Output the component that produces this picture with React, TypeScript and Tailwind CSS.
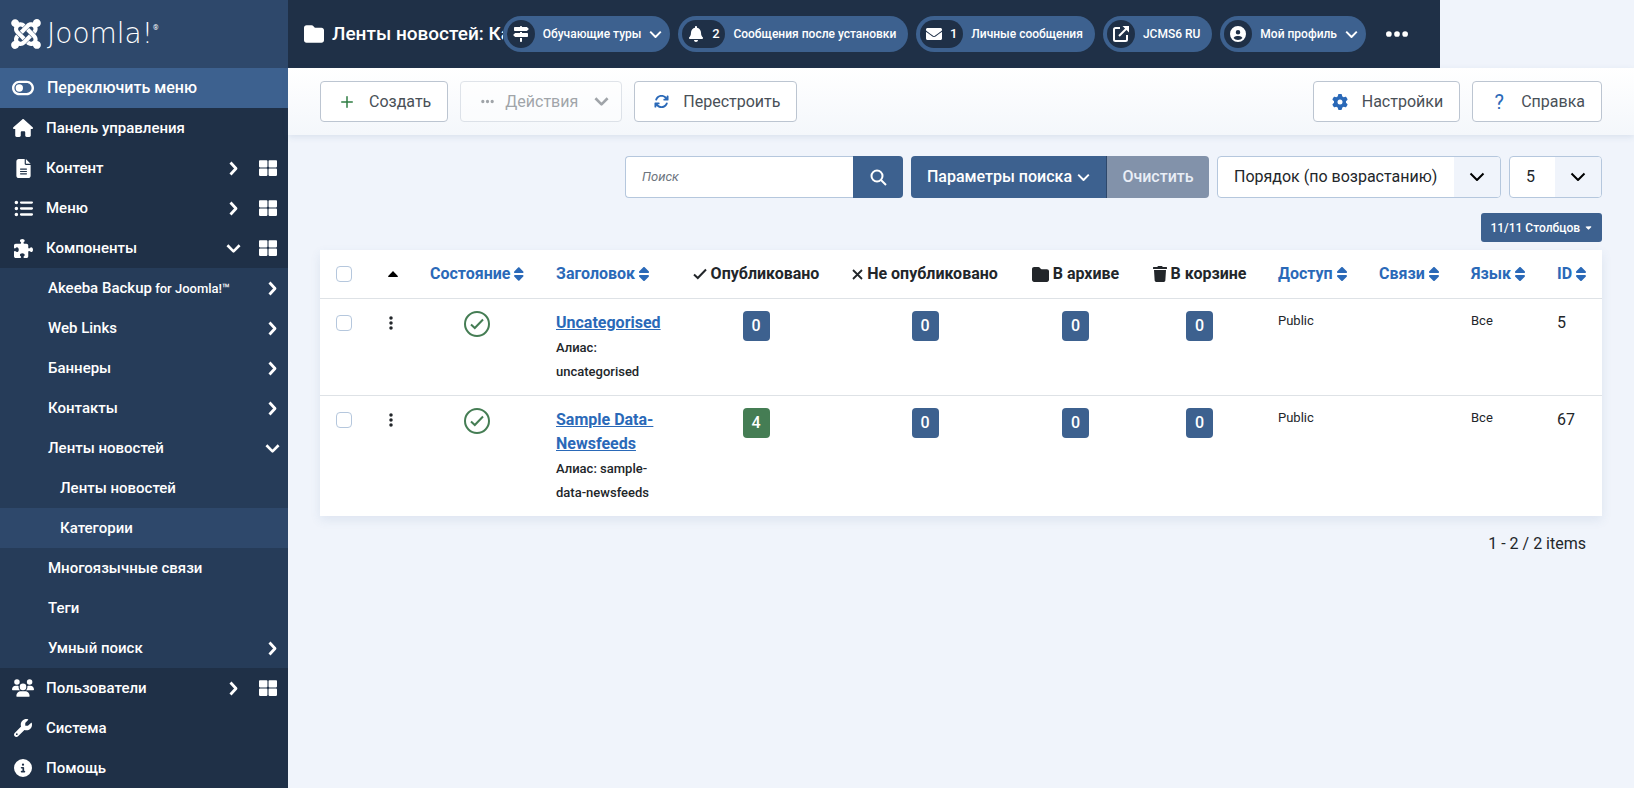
import React from "react";
import clsx from "clsx";
import {
    FaArrowsRotate,
    FaCaretDown,
    FaCircleInfo,
    FaCircleUser,
    FaEllipsis,
    FaEllipsisVertical,
    FaFileLines,
    FaFolder,
    FaGear,
    FaHouse,
    FaListUl,
    FaPuzzlePiece,
    FaSignsPost,
    FaSort,
    FaToggleOff,
    FaUsers,
    FaWrench,
} from "react-icons/fa6";
import { FaBell, FaEnvelope, FaJoomla, FaThLarge, FaTrash } from "react-icons/fa";
import { Plus } from "lucide-react";

type MenuItem = {
    label: string;
    small?: string;
    icon?: React.ReactNode;
    level: 1 | 2 | 3;
    arrow?: "right" | "down";
    dashboard?: boolean;
    active?: boolean;
};

const mainTop: MenuItem[] = [
    { label: "Панель управления", icon: <FaHouse size={20} />, level: 1 },
    { label: "Контент", icon: <FaFileLines size={19} />, level: 1, arrow: "right", dashboard: true },
    { label: "Меню", icon: <FaListUl size={19} />, level: 1, arrow: "right", dashboard: true },
    { label: "Компоненты", icon: <FaPuzzlePiece size={19} />, level: 1, arrow: "down", dashboard: true },
];

const components: MenuItem[] = [
    { label: "Akeeba Backup", small: "for Joomla!™", level: 2, arrow: "right" },
    { label: "Web Links", level: 2, arrow: "right" },
    { label: "Баннеры", level: 2, arrow: "right" },
    { label: "Контакты", level: 2, arrow: "right" },
    { label: "Ленты новостей", level: 2, arrow: "down" },
    { label: "Ленты новостей", level: 3 },
    { label: "Категории", level: 3, active: true },
    { label: "Многоязычные связи", level: 2 },
    { label: "Теги", level: 2 },
    { label: "Умный поиск", level: 2, arrow: "right" },
];

const mainBottom: MenuItem[] = [
    { label: "Пользователи", icon: <FaUsers size={22} />, level: 1, arrow: "right", dashboard: true },
    { label: "Система", icon: <FaWrench size={18} />, level: 1 },
    { label: "Помощь", icon: <FaCircleInfo size={18} />, level: 1 },
];

const ChevronRight = () => (
    <svg width="9" height="15" viewBox="0 0 9 15" fill="none" stroke="currentColor" strokeWidth="2.8" strokeLinejoin="round">
        <path d="M1.500 1.500 7 7.500 1.500 13.500" />
    </svg>
);

const ChevronDown = ({ size = 15, stroke = 2.8, className }: { size?: number; stroke?: number; className?: string }) => (
    <svg
        width={size}
        height={size}
        viewBox="0 0 16 16"
        fill="none"
        stroke="currentColor"
        strokeWidth={stroke}
        strokeLinejoin="round"
        className={className}
    >
        <path d="M1.500 4.500 8 11 14.500 4.500" />
    </svg>
);

const CheckIcon = () => (
    <svg width="14" height="12" viewBox="0 0 14 12" fill="none" stroke="currentColor" strokeWidth="2">
        <path d="M1 6.500 4.800 10 13 1.500" />
    </svg>
);

const CrossIcon = () => (
    <svg width="11" height="11" viewBox="0 0 11 11" fill="none" stroke="currentColor" strokeWidth="1.8">
        <path d="M1 1 10 10M10 1 1 10" />
    </svg>
);

const SearchIcon = () => (
    <svg width="17" height="17" viewBox="0 0 17 17" fill="none" stroke="currentColor" strokeWidth="2">
        <circle cx="7" cy="7" r="5.500" />
        <path d="m11 11 5 5" />
    </svg>
);

const ExternalIcon = () => (
    <svg width="18" height="18" viewBox="0 0 18 18" fill="none" stroke="currentColor" strokeWidth="2">
        <path d="M8 3H3.500A1.500 1.500 0 0 0 2 4.500V14.500A1.500 1.500 0 0 0 3.500 16H13.500A1.500 1.500 0 0 0 15 14.500V10" />
        <path d="M7 11 14.500 3.500" />
        <path d="M10.500 1H17V7.500Z" fill="currentColor" stroke="none" />
    </svg>
);

const MenuRow = ({ item }: { item: MenuItem }) => {
    return (
        <li
            className={clsx(
                "flex h-10 items-center text-[15px] font-medium text-white",
                item.level === 1 && "pl-3",
                item.level === 2 && "pl-12",
                item.level === 3 && "pl-[60px]",
                item.active && "bg-[#2e486b]"
            )}
        >
            <a href="#" className="flex flex-1 items-center">
                {item.icon && <span className="mr-3 flex w-[22px] justify-center">{item.icon}</span>}
                <span>
                    {item.label}
                    {item.small && <span className="text-[13px]"> {item.small}</span>}
                </span>
            </a>
            {item.arrow && (
                <span className={clsx("flex w-5 justify-center", item.dashboard ? "mr-4" : "mr-[6px]")}>
                    {item.arrow === "right" ? <ChevronRight /> : <ChevronDown />}
                </span>
            )}
            {item.dashboard && (
                <a href="#" aria-label="Панель" className="mr-[11px]">
                    <FaThLarge size={18} />
                </a>
            )}
        </li>
    );
};

const SideBar = () => {
    return (
        <aside className="w-72 shrink-0 bg-[#1f3047]">
            <a href="#" className="flex h-[68px] items-center bg-[#2e486b] pl-[9px] text-white">
                <FaJoomla size={34} />
                <span className="ml-1 font-['DejaVu_Sans'] text-[28px] font-extralight">Joomla!</span>
                <span className="mb-3 text-[7px]">®</span>
            </a>
            <button className="flex h-10 w-full items-center bg-[#3d618f] pl-3 font-medium text-white">
                <span className="mr-[13px] flex w-[22px] justify-center">
                    <FaToggleOff size={22} />
                </span>
                Переключить меню
            </button>
            <ul>
                {mainTop.map((item) => (
                    <MenuRow key={item.label} item={item} />
                ))}
            </ul>
            <ul className="bg-[#263c59]">
                {components.map((item) => (
                    <MenuRow key={item.label + item.level} item={item} />
                ))}
            </ul>
            <ul>
                {mainBottom.map((item) => (
                    <MenuRow key={item.label} item={item} />
                ))}
            </ul>
        </aside>
    );
};

const HeaderPill = ({
    icon,
    label,
    count,
    arrow,
}: {
    icon: React.ReactNode;
    label: string;
    count?: number;
    arrow?: boolean;
}) => {
    return (
        <button
            className={clsx(
                "flex h-9 shrink-0 items-center rounded-full bg-[#3d618f] pl-1 text-xs font-medium whitespace-nowrap text-white",
                arrow ? "pr-2" : "pr-3"
            )}
        >
            <span
                className={clsx(
                    "mr-2 flex h-7 items-center justify-center gap-2 rounded-full bg-[#1f3047]",
                    count ? "w-[43px]" : "w-7"
                )}
            >
                {icon}
                {count && <span className="text-[13px]">{count}</span>}
            </span>
            {label}
            {arrow && <ChevronDown size={13} stroke={2.4} className="ml-2" />}
        </button>
    );
};

const Header = () => {
    return (
        <header className="flex h-[68px] max-w-[1152px] items-center gap-2 bg-[#1f3047] pr-[30px] pl-4 text-white">
            <div className="-mr-2 flex min-w-0 flex-1 items-center gap-2 overflow-hidden">
                <FaFolder size={20} className="shrink-0" />
                <h1 className="text-[19px] font-medium whitespace-nowrap">Ленты новостей: Категории</h1>
            </div>
            <HeaderPill icon={<FaSignsPost size={16} />} label="Обучающие туры" arrow />
            <HeaderPill icon={<FaBell size={16} />} label="Сообщения после установки" count={2} />
            <HeaderPill icon={<FaEnvelope size={16} />} label="Личные сообщения" count={1} />
            <HeaderPill icon={<ExternalIcon />} label="JCMS6 RU" />
            <HeaderPill icon={<FaCircleUser size={16} />} label="Мой профиль" arrow />
            <button aria-label="Ещё" className="ml-[10px]">
                <FaEllipsis size={26} />
            </button>
        </header>
    );
};

const ToolButton = ({
    icon,
    label,
    arrow,
    disabled,
}: {
    icon: React.ReactNode;
    label: string;
    arrow?: boolean;
    disabled?: boolean;
}) => {
    return (
        <button
            disabled={disabled}
            className={clsx(
                "flex h-[41px] items-center rounded border bg-white px-4 text-[#495057]",
                disabled ? "border-[#c3cbd6] opacity-50" : "border-[#bcc5d1]"
            )}
        >
            <span className={clsx("flex w-5 justify-center", arrow ? "mr-2" : "mr-3")}>{icon}</span>
            {label}
            {arrow && <ChevronDown size={15} className="-mr-1 ml-4" />}
        </button>
    );
};

const Toolbar = () => {
    return (
        <div className="flex h-[67px] items-center gap-3 bg-gradient-to-b from-white to-[#f4f7fb] px-8 shadow-[0_2px_6px_rgba(61,97,143,0.12)]">
            <ToolButton icon={<Plus size={18} className="text-[#2f7d43]" />} label="Создать" />
            <ToolButton icon={<FaEllipsis size={15} />} label="Действия" arrow disabled />
            <ToolButton icon={<FaArrowsRotate size={15} className="text-[#2a69b8]" />} label="Перестроить" />
            <div className="ml-auto flex gap-3">
                <ToolButton icon={<FaGear size={16} className="text-[#2a69b8]" />} label="Настройки" />
                <ToolButton icon={<span className="text-xl text-[#2a69b8]">?</span>} label="Справка" />
            </div>
        </div>
    );
};

const SelectBox = ({ label, value, className }: { label: string; value: string; className: string }) => {
    return (
        <div className={clsx("relative h-[42px] overflow-hidden rounded border border-[#b5c7dd] bg-white", className)}>
            <select aria-label={label} className="h-full w-full appearance-none bg-transparent pl-4 text-[#22262a]">
                <option>{value}</option>
            </select>
            <span className="pointer-events-none absolute top-0 right-0 flex h-full w-[46px] items-center justify-center bg-[#f0f4fb]">
                <ChevronDown size={16} stroke={2} className="text-black" />
            </span>
        </div>
    );
};

const Filters = () => {
    return (
        <div className="flex flex-wrap justify-end gap-2">
            <div className="flex h-[42px]">
                <input
                    type="text"
                    aria-label="Поиск"
                    placeholder="Поиск"
                    className="w-[228px] rounded-l border border-r-0 border-[#b5c7dd] bg-white px-4 text-[13px] placeholder:text-[#6d757e] placeholder:italic"
                />
                <button aria-label="Найти" className="flex w-[50px] items-center justify-center rounded-r bg-[#3d618f] text-white">
                    <SearchIcon />
                </button>
            </div>
            <div className="flex h-[42px] font-medium text-white">
                <button className="flex w-[196px] items-center justify-center gap-[5px] rounded-l border-r border-[#2e486b] bg-[#3d618f]">
                    Параметры поиска
                    <ChevronDown size={13} stroke={2.4} />
                </button>
                <button className="w-[102px] rounded-r bg-[#8292aa] text-[#e9eef6]">Очистить</button>
            </div>
            <SelectBox label="Сортировка" value="Порядок (по возрастанию)" className="w-[284px]" />
            <SelectBox label="Количество" value="5" className="w-[93px]" />
        </div>
    );
};

const SortHead = ({ label, className }: { label: string; className?: string }) => (
    <th className="px-4 py-3">
        <a href="#" className={clsx("flex items-center gap-1 whitespace-nowrap text-[#2a69b8]", className)}>
            {label}
            <FaSort className="h-4 w-[10px]" />
        </a>
    </th>
);

const CountHead = ({ icon, label }: { icon: React.ReactNode; label: string }) => (
    <th className="py-3">
        <div className="flex items-center justify-center gap-1 whitespace-nowrap">
            {icon}
            {label}
        </div>
    </th>
);

const rows = [
    { id: 5, title: "Uncategorised", alias: "uncategorised", counts: [0, 0, 0, 0] },
    { id: 67, title: "Sample Data-Newsfeeds", alias: "sample-data-newsfeeds", counts: [4, 0, 0, 0] },
];

const CategoryTable = () => {
    return (
        <table className="w-full table-fixed border-collapse bg-white text-left shadow-[0_4px_10px_rgba(61,97,143,0.1)]">
            <colgroup>
                <col className="w-[48px]" />
                <col className="w-[46px]" />
                <col className="w-[126px]" />
                <col className="w-[136px]" />
                <col className="w-[160px]" />
                <col className="w-[178px]" />
                <col className="w-[123px]" />
                <col className="w-[125px]" />
                <col className="w-[101px]" />
                <col className="w-[92px]" />
                <col className="w-[86px]" />
                <col className="w-[61px]" />
            </colgroup>
            <thead>
                <tr className="border-b border-[#dee2e6]">
                    <th className="py-3 pl-4">
                        <input
                            type="checkbox"
                            aria-label="Выбрать все"
                            className="block size-4 appearance-none rounded border border-[#b5c7dd] bg-white"
                        />
                    </th>
                    <th className="py-3 pl-1">
                        <svg width="10" height="6" viewBox="0 0 10 6" className="mx-auto text-black">
                            <path d="M5 0 10 5.200 9.500 6H.5L0 5.200Z" fill="currentColor" />
                        </svg>
                    </th>
                    <SortHead label="Состояние" className="justify-center" />
                    <SortHead label="Заголовок" />
                    <CountHead icon={<CheckIcon />} label="Опубликовано" />
                    <CountHead icon={<CrossIcon />} label="Не опубликовано" />
                    <CountHead icon={<FaFolder size={17} />} label="В архиве" />
                    <CountHead icon={<FaTrash className="h-4 w-[14px]" />} label="В корзине" />
                    <SortHead label="Доступ" />
                    <SortHead label="Связи" />
                    <SortHead label="Язык" />
                    <SortHead label="ID" />
                </tr>
            </thead>
            <tbody>
                {rows.map((row) => (
                    <tr key={row.id} className="border-b border-[#dee2e6] align-top last:border-b-0">
                        <td className="py-4 pl-4">
                            <input
                                type="checkbox"
                                aria-label={row.title}
                                className="block size-4 appearance-none rounded border border-[#b5c7dd] bg-white"
                            />
                        </td>
                        <td className="py-4">
                            <FaEllipsisVertical size={16} className="mx-auto" />
                        </td>
                        <td className="py-3">
                            <a
                                href="#"
                                aria-label="Опубликовано"
                                className="mx-auto flex size-[26px] items-center justify-center rounded-full border-2 border-[#457d54] text-[#457d54]"
                            >
                                <CheckIcon />
                            </a>
                        </td>
                        <th className="px-4 py-3 font-medium">
                            <a href="#" className="font-bold text-[#2a69b8] underline">
                                {row.title}
                            </a>
                            <div>
                                <span className="text-[13px]">Алиас: {row.alias}</span>
                            </div>
                        </th>
                        {row.counts.map((count, i) => (
                            <td key={i} className="py-3">
                                <a
                                    href="#"
                                    className={clsx(
                                        "mx-auto flex h-[30px] w-[27px] items-center justify-center rounded font-medium text-white",
                                        count > 0 ? "bg-[#457d54]" : "bg-[#3d618f]"
                                    )}
                                >
                                    {count}
                                </a>
                            </td>
                        ))}
                        <td className="px-4 py-3 text-[13px] leading-5">Public</td>
                        <td></td>
                        <td className="px-4 py-3 text-[13px] leading-5">Все</td>
                        <td className="px-4 py-3">{row.id}</td>
                    </tr>
                ))}
            </tbody>
        </table>
    );
};

const App = () => {
    return (
        <div className="flex min-h-screen bg-[#f0f4fb] font-['Roboto',sans-serif] text-base text-[#22262a]">
            <SideBar />
            <div className="min-w-0 flex-1">
                <Header />
                <Toolbar />
                <main className="px-8 pt-[21px]">
                    <Filters />
                    <div className="mt-[15px] mb-2 flex justify-end">
                        <button className="flex h-[29px] items-center gap-1 rounded-[3px] bg-[#3d618f] px-[9px] text-xs font-medium text-white">
                            11/11 Столбцов
                            <FaCaretDown size={9} />
                        </button>
                    </div>
                    <CategoryTable />
                    <p className="mt-4 pr-4 text-right">1 - 2 / 2 items</p>
                </main>
            </div>
        </div>
    );
};

export default App;
